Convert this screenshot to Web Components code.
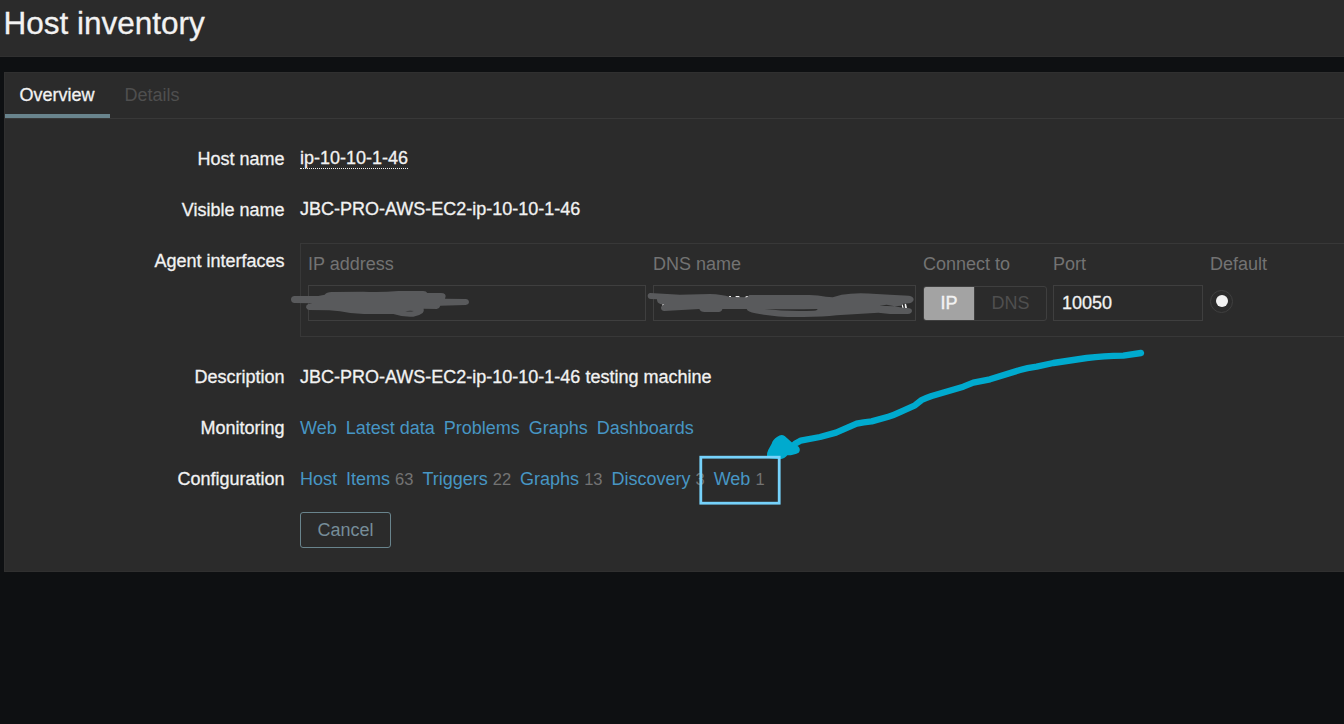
<!DOCTYPE html>
<html lang="en">
<head>
<meta charset="utf-8">
<title>Host inventory</title>
<style>
html,body{margin:0;height:100%;overflow:hidden;background:#0e1012}
body{font:18px/21px "Liberation Sans",Arial,sans-serif;color:#f2f2f2}
</style>
</head>
<body>
<inventory-page></inventory-page>
<script>
const define=(name,html)=>customElements.define(name,class extends HTMLElement{
  constructor(){
    super();
    const t=document.createElement('template');
    t.innerHTML=html;
    this.attachShadow({mode:'open'}).append(t.content.cloneNode(true));
  }
});

define('page-header',`<style>
:host{display:block;box-sizing:border-box;height:57px;padding:5px 0 0 3.5px;background:#2b2b2b;border-bottom:1px solid #303030}
h1{margin:0;font-size:31.5px;line-height:36px;font-weight:400;-webkit-text-stroke:.3px}
</style><h1><slot></slot></h1>`);

define('tab-item',`<style>
:host{display:block;box-sizing:border-box;height:45px;padding:12px 15.5px 0 14.5px;color:#4f4f4f}
:host([selected]){color:#f2f2f2;border-bottom:4px solid #69848d;-webkit-text-stroke:.3px}
</style><slot></slot>`);

define('tab-bar',`<style>
:host{display:flex;height:45px;border-bottom:1px solid #383838}
</style><slot></slot>`);

define('form-row',`<style>
:host{display:grid;grid-template-columns:279.6px 1fr;column-gap:15.4px;box-sizing:border-box;min-height:51px}
.l{text-align:right;padding-top:15px;-webkit-text-stroke:.3px}
.v{padding-top:var(--value-top,15px);white-space:nowrap}
</style><div class="l"><slot name="label"></slot></div><div class="v"><slot></slot></div>`);

define('value-text',`<style>
:host{display:inline-block;-webkit-text-stroke:.3px}
:host([hint]){line-height:20px;border-bottom:1px dotted #f2f2f2}
</style><slot></slot>`);

define('nav-link',`<style>
:host{display:inline-block;margin-right:9px;color:#4796c4}
::slotted([slot=count]){font-size:16.5px;color:#737373}
</style><slot></slot><slot name="count"></slot>`);

define('text-field',`<style>
:host{display:block;box-sizing:border-box;height:36px;border:1px solid #3f3f3f;padding:7px 8px;-webkit-text-stroke:.3px}
</style><slot></slot>`);

define('segmented-control',`<style>
:host{display:flex;box-sizing:border-box;width:124px;height:35px;margin-top:1px;border:1px solid #3f3f3f;border-radius:3px;overflow:hidden;text-align:center;line-height:32px}
.a{width:50px;background:#a3a3a3;-webkit-text-stroke:.4px}
.b{flex:1;color:#4f4f4f;border-left:1px solid #3f3f3f}
</style><div class="a"><slot name="on"></slot></div><div class="b"><slot name="off"></slot></div>`);

define('radio-dot',`<style>
:host{display:flex;box-sizing:border-box;width:23px;height:23px;margin-top:5px;border:1px solid #3f3f3f;border-radius:50%;align-items:flex-start;justify-content:center}
i{width:12px;height:12px;margin:4px 0 0 1px;border-radius:50%;background:#f2f2f2}
</style><i></i>`);

define('interface-table',`<style>
:host{display:grid;grid-template-columns:338px 263px 124px 150px 1fr;column-gap:7px;row-gap:10px;grid-template-rows:21px 36px;box-sizing:border-box;height:94px;padding:10px 7px 0;border:1px solid #383838;border-right:0}
.h{color:#737373}
</style>
<div class="h">IP address</div><div class="h">DNS name</div><div class="h">Connect to</div><div class="h" style="margin-left:-1px">Port</div><div class="h" style="margin-left:-1px">Default</div>
<text-field></text-field><text-field></text-field>
<segmented-control><span slot="on">IP</span><span slot="off">DNS</span></segmented-control>
<text-field style="margin:0 0 0 -1px;width:150px">10050</text-field>
<radio-dot style="margin-left:-1px"></radio-dot>`);

define('cancel-button',`<style>
:host{display:block;box-sizing:border-box;width:91px;height:36px;margin:7px 0 0 295px;border:1px solid #69848d;border-radius:3px;text-align:center;line-height:34px;color:#768d99}
</style><slot></slot>`);

define('ink-layer',`<style>
:host{position:absolute;left:0;top:0;width:1344px;height:724px;pointer-events:none}
svg{display:block}
</style>
<svg width="1344" height="724" viewBox="0 0 1344 724" fill="none" stroke-linecap="round" stroke-linejoin="round">
<g transform="translate(285 235) scale(.33333)" fill="#595a5c">
<path d="M29 183Q18 184 18 193Q18 204 29 204L82 205L70 207Q63 210 63 217Q65 225 73 225L133 226L165 229Q210 239 250 237L325 237Q355 247 385 245Q402 243 413 234Q418 228 416 221L455 222Q464 220 466 212L542 210Q552 208 552 201Q551 192 542 192L480 191Q485 184 480 178Q476 174 468 174L427 174Q424 168 415 168L340 168Q290 172 235 170L140 171Q125 171 119 179L100 183Z"/>
<path d="M361 229Q372 226 386 228Q378 231 361 229Z" fill="#2b2b2b"/>
</g>
<g transform="translate(640 235) scale(.33333)">
<path fill="#f2f2f2" d="M67 206h6v7h-6zM267 183h6v4h-6zM286 183l11 0 4 5h-12zM313 189l5-5 8-1v5zM785 209l3-1 3 11h-4zM794 206h4l3 13h-6z"/>
<path fill="#595a5c" d="M31 174Q23 175 23 183Q24 192 32 192L51 193Q51 205 61 207L75 209Q64 209 63 218Q63 227 73 228L178 222Q181 231 194 231L236 231Q246 230 247 222L320 222Q323 231 346 235Q410 248 490 246Q550 246 590 241L715 233L750 237L803 237Q816 236 816 227Q815 219 803 219L788 218L764 214L783 212L789 206L808 205Q820 202 821 193Q820 184 807 182L750 179L710 177Q650 171 605 179L578 187L558 185Q530 179 500 180L328 180L321 187L270 186Q246 178 210 177L120 179Z"/>
<path fill="#2b2b2b" d="M374 222Q450 224 532 222Q535 226 521 227Q440 230 374 222ZM718 212L740 209L764 214Q740 213 718 212Z"/>
</g>
<g transform="translate(690 340) scale(.33333)">
<path d="M1353 39L1300 47Q1240 48 1190 54L1090 69L1040 80Q1010 84 990 90L900 118L850 128L820 140L725 168Q705 175 695 180L675 196L635 214Q612 225 595 230L545 244Q520 246 500 251L438 278L390 291L332 302Q318 308 306 320" stroke="#00aace" stroke-width="19"/>
<path d="M231 347Q230 339 235 329L245 311Q248 299 262 290Q274 281 284 288L305 307L326 320Q333 329 326 338Q314 345 292 346Q284 357 270 358L240 355Q232 353 231 347Z" fill="#00aace"/>
</g>
<rect x="700.8" y="457.2" width="78.4" height="46" stroke="#76d2fb" stroke-width="2.8" stroke-linejoin="miter"/>
</svg>`);

define('inventory-page',`<style>
:host{display:block;height:724px;overflow:hidden;position:relative}
main{box-sizing:border-box;height:500px;margin:15px 0 0 4px;border:1px solid #303030;border-right:0;background:#2b2b2b}
.form{padding-top:15px}
</style>
<page-header>Host inventory</page-header>
<main>
<tab-bar><tab-item selected>Overview</tab-item><tab-item>Details</tab-item></tab-bar>
<div class="form">
<form-row style="--value-top:14px"><span slot="label">Host name</span><value-text hint>ip-10-10-1-46</value-text></form-row>
<form-row style="--value-top:14px"><span slot="label">Visible name</span><value-text>JBC-PRO-AWS-EC2-ip-10-10-1-46</value-text></form-row>
<form-row style="--value-top:7px;height:116px"><span slot="label">Agent interfaces</span><interface-table></interface-table></form-row>
<form-row><span slot="label">Description</span><value-text>JBC-PRO-AWS-EC2-ip-10-10-1-46 testing machine</value-text></form-row>
<form-row><span slot="label">Monitoring</span><nav-link>Web</nav-link><nav-link>Latest data</nav-link><nav-link>Problems</nav-link><nav-link>Graphs</nav-link><nav-link>Dashboards</nav-link></form-row>
<form-row><span slot="label">Configuration</span><nav-link>Host</nav-link><nav-link>Items <span slot="count">63</span></nav-link><nav-link>Triggers <span slot="count">22</span></nav-link><nav-link>Graphs <span slot="count">13</span></nav-link><nav-link>Discovery <span slot="count">3</span></nav-link><nav-link>Web <span slot="count">1</span></nav-link></form-row>
<cancel-button>Cancel</cancel-button>
</div>
</main>
<ink-layer></ink-layer>`);
</script>
</body>
</html>
